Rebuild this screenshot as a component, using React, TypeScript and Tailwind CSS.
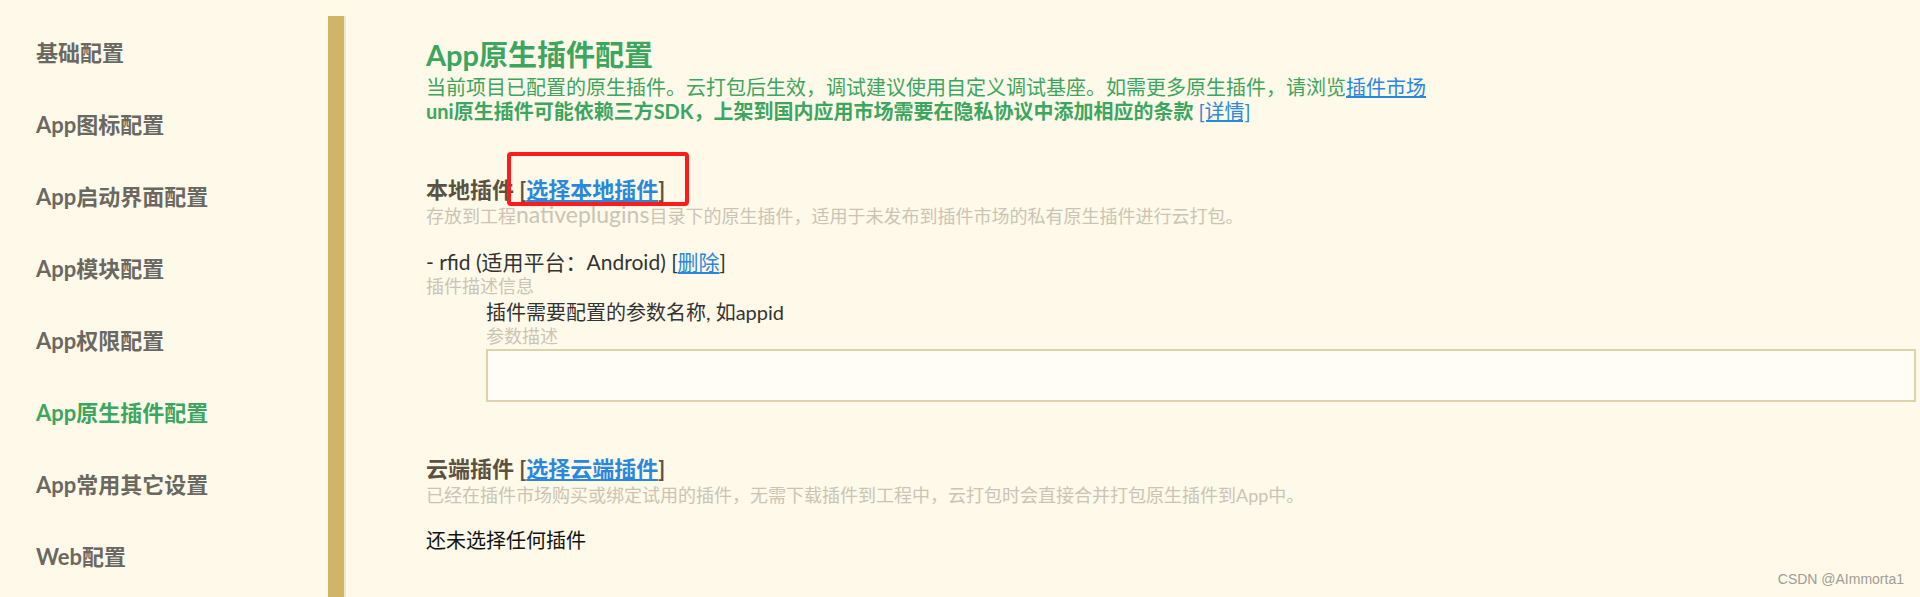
const menu = [
  "基础配置",
  "App图标配置",
  "App启动界面配置",
  "App模块配置",
  "App权限配置",
  "App原生插件配置",
  "App常用其它设置",
  "Web配置",
];

const font = { fontFamily: 'Lato, "Noto Sans CJK SC", sans-serif' };

export default function App() {
  return (
    <div
      className="relative h-[597px] overflow-hidden bg-[#fef9e8] flex text-[#333333]"
      style={font}
    >
      {/* Sidebar */}
      <aside className="w-[328px] shrink-0 pt-[16px] pl-[36px]">
        {menu.map((m) => (
          <div
            key={m}
            className={
              "h-[72px] flex items-center text-[22px] font-bold " +
              (m === "App原生插件配置" ? "text-[#3ba660]" : "text-[#6b6862]")
            }
          >
            {m}
          </div>
        ))}
      </aside>

      <div className="mt-[16px] w-[18px] shrink-0 bg-[#cfb46a] border-r-2 border-[#f1e6c4]"></div>

      {/* Content */}
      <main className="flex-1 pl-[80px] pr-[4px] pt-[38px]">
        <h1 className="text-[29px] leading-[34px] font-bold text-[#3ba660]">App原生插件配置</h1>
        <div className="mt-[3px] text-[20px] leading-[24px] text-[#3ba660]">
          <p>
            当前项目已配置的原生插件。云打包后生效，调试建议使用自定义调试基座。如需更多原生插件，请浏览
            <a className="text-[#2a88dc] underline">插件市场</a>
          </p>
          <p className="font-bold">
            uni原生插件可能依赖三方SDK，上架到国内应用市场需要在隐私协议中添加相应的条款{" "}
            <a className="font-normal text-[#2a88dc] underline">[详情]</a>
          </p>
        </div>

        {/* Local plugins */}
        <div className="relative mt-[54px] text-[22px] leading-[25px] font-bold text-[#5b5242]">
          本地插件 [<a className="text-[#2a88dc] underline">选择本地插件</a>]
          <div className="absolute left-[81px] top-[-25px] w-[182px] h-[54px] border-4 border-[#ff1b1b] rounded-[4px] pointer-events-none"></div>
        </div>
        <p className="text-[18px] leading-[24px] text-[#cbc4b5]">
          存放到工程<span className="text-[23px]">nativeplugins</span>目录下的原生插件，适用于未发布到插件市场的私有原生插件进行云打包。
        </p>

        <p className="mt-[22px] text-[21px] leading-[24px] text-[#333333]">
          - rfid (适用平台：Android) [<a className="text-[#2a88dc] underline">删除</a>]
        </p>
        <p className="text-[18px] leading-[24px] text-[#cbc4b5]">插件描述信息</p>
        <div className="pl-[60px]">
          <p className="mt-[1px] text-[20px] leading-[26px] text-[#333333]">插件需要配置的参数名称, 如appid</p>
          <p className="text-[18px] leading-[22px] text-[#cbc4b5]">参数描述</p>
          <input className="mt-[2px] block w-full h-[53px] border-2 border-[#dfd2aa] bg-[#fffdf5] outline-none" />
        </div>

        {/* Cloud plugins */}
        <div className="mt-[54px] text-[22px] leading-[26px] font-bold text-[#5b5242]">
          云端插件 [<a className="text-[#2a88dc] underline">选择云端插件</a>]
        </div>
        <p className="mt-[1px] text-[18px] leading-[24px] text-[#cbc4b5]">
          已经在插件市场购买或绑定试用的插件，无需下载插件到工程中，云打包时会直接合并打包原生插件到App中。
        </p>
        <p className="mt-[21px] text-[20px] leading-[24px] text-[#111111]">还未选择任何插件</p>
      </main>

      <div
        className="absolute right-[16px] bottom-[7px] text-[14px] text-[#a09d97]"
        style={{ fontFamily: '"Liberation Sans", Arial, sans-serif' }}
      >
        CSDN @AImmorta1
      </div>
    </div>
  );
}
